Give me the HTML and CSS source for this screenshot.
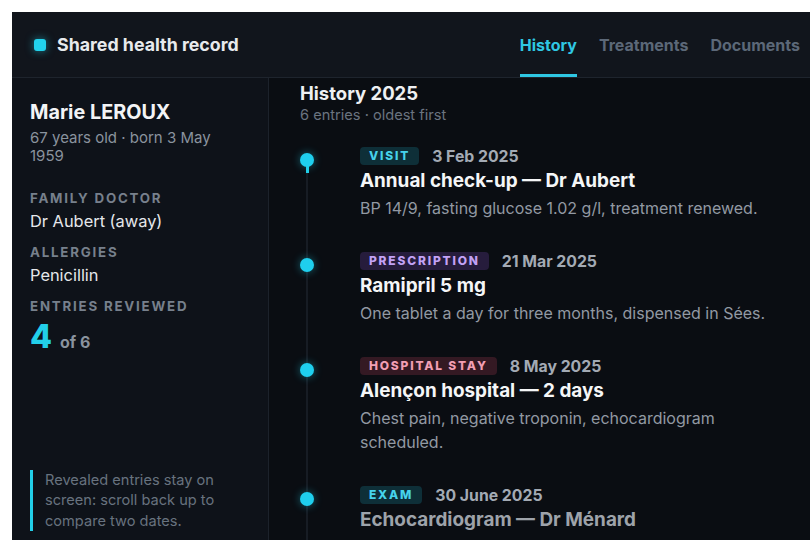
FILE: index.html
```html
<!DOCTYPE html>
<html lang="en">
<head>
<meta charset="utf-8">
<title>Shared health record</title>
<link rel="stylesheet" href="styles.css">
</head>
<body>
<div class="app">
  <header class="topbar">
    <div class="brand"><span class="brand-dot"></span><span class="brand-name">Shared health record</span></div>
    <nav class="tabs">
      <a class="tab active">History</a>
      <a class="tab">Treatments</a>
      <a class="tab">Documents</a>
    </nav>
  </header>
  <div class="body">
    <aside class="sidebar">
      <h1 class="patient">Marie LEROUX</h1>
      <p class="patient-meta">67 years old · born 3 May 1959</p>
      <div class="label first">Family doctor</div>
      <div class="value">Dr Aubert (away)</div>
      <div class="label">Allergies</div>
      <div class="value">Penicillin</div>
      <div class="label">Entries reviewed</div>
      <div class="count"><span class="count-num">4</span><span class="count-of">of 6</span></div>
      <p class="note">Revealed entries stay on screen: scroll back up to compare two dates.</p>
    </aside>
    <main class="main">
      <h2 class="section-title">History 2025</h2>
      <p class="section-sub">6 entries · oldest first</p>
      <div class="timeline">
        <span class="progress"></span>
        <article class="entry">
          <span class="dot"></span>
          <div class="entry-head"><span class="badge visit">Visit</span><span class="date">3 Feb 2025</span></div>
          <h3 class="entry-title">Annual check-up — Dr Aubert</h3>
          <p class="entry-desc">BP 14/9, fasting glucose 1.02 g/l, treatment renewed.</p>
        </article>
        <article class="entry">
          <span class="dot"></span>
          <div class="entry-head"><span class="badge prescription">Prescription</span><span class="date">21 Mar 2025</span></div>
          <h3 class="entry-title">Ramipril 5 mg</h3>
          <p class="entry-desc">One tablet a day for three months, dispensed in Sées.</p>
        </article>
        <article class="entry">
          <span class="dot"></span>
          <div class="entry-head"><span class="badge hospital">Hospital stay</span><span class="date">8 May 2025</span></div>
          <h3 class="entry-title">Alençon hospital — 2 days</h3>
          <p class="entry-desc">Chest pain, negative troponin, echocardiogram scheduled.</p>
        </article>
        <article class="entry revealing">
          <span class="dot"></span>
          <div class="entry-head"><span class="badge exam">Exam</span><span class="date">30 June 2025</span></div>
          <h3 class="entry-title">Echocardiogram — Dr Ménard</h3>
        </article>
      </div>
    </main>
  </div>
</div>
</body>
</html>
```

FILE: styles.css
```css
* { box-sizing: border-box; }
html, body { margin: 0; padding: 0; }
body {
  background: #ffffff;
  padding: 12px 0 0 12px;
  overflow: hidden;
  font-family: Inter, "Noto Sans", "Liberation Sans", sans-serif;
}
.app {
  width: 808px;
  height: 537px;
  background: #0a0d12;
  display: flex;
  flex-direction: column;
  overflow: hidden;
}
.topbar {
  height: 66px;
  flex: none;
  background: #11151c;
  border-bottom: 1px solid #1e242d;
  display: flex;
  align-items: stretch;
  justify-content: space-between;
  padding: 0 20px 0 22px;
}
.brand {
  display: flex;
  align-items: center;
  gap: 11px;
}
.brand-dot {
  width: 12px;
  height: 12px;
  border-radius: 3px;
  background: #22d3ee;
  box-shadow: 0 0 8px rgba(34, 211, 238, 0.55);
}
.brand-name {
  color: #e8eaed;
  font-size: 17.8px;
  font-weight: 700;
}
.tabs {
  display: flex;
  gap: 22px;
}
.tab {
  display: flex;
  align-items: center;
  padding-top: 3px;
  border-bottom: 3px solid transparent;
  color: #5c6878;
  font-size: 16px;
  font-weight: 700;
  cursor: pointer;
}
.tab.active {
  color: #2fc7e3;
  border-bottom-color: #2fc7e3;
}
.body {
  flex: 1;
  display: flex;
  min-height: 0;
}
.sidebar {
  width: 257px;
  flex: none;
  background: #0e1219;
  border-right: 1px solid #1c222b;
  padding: 22px 26px 18px 18px;
  display: flex;
  flex-direction: column;
}
.patient {
  margin: 0;
  color: #f3f4f6;
  font-size: 19.8px;
  line-height: 24px;
  font-weight: 700;
}
.patient-meta {
  margin: 5px 0 0;
  color: #8a939e;
  font-size: 15px;
  line-height: 18px;
}
.label {
  margin-top: 13px;
  color: #77808c;
  font-size: 13.3px;
  line-height: 16px;
  font-weight: 700;
  letter-spacing: 1.8px;
  text-transform: uppercase;
}
.label.first { margin-top: 25px; }
.value {
  margin-top: 5px;
  color: #e5e7eb;
  font-size: 16.4px;
  line-height: 20px;
}
.count {
  margin-top: 4px;
  display: flex;
  align-items: baseline;
  gap: 8px;
}
.count-num {
  color: #22cfe9;
  font-size: 32px;
  line-height: 38px;
  font-weight: 800;
}
.count-of {
  color: #8a939e;
  font-size: 16px;
  font-weight: 700;
}
.note {
  margin: auto -8px 0 0;
  border-left: 3px solid #22cfe9;
  padding-left: 12px;
  color: #68727f;
  font-size: 14.6px;
  line-height: 20.5px;
}
.main {
  flex: 1;
  min-width: 0;
  padding: 4px 0 0 31px;
  overflow: hidden;
}
.section-title {
  margin: 0;
  color: #eef0f2;
  font-size: 18.5px;
  line-height: 22px;
  font-weight: 700;
}
.section-sub {
  margin: 2px 0 0;
  color: #6b7480;
  font-size: 14.6px;
  line-height: 18px;
}
.timeline {
  position: relative;
  margin-top: 22px;
  padding-left: 60px;
}
.timeline::before {
  content: "";
  position: absolute;
  left: 6px;
  top: 14px;
  bottom: -200px;
  width: 2px;
  background: #171c24;
}
.progress {
  position: absolute;
  left: 6px;
  top: 14px;
  width: 3px;
  height: 13px;
  background: #22cfe9;
}
.entry {
  position: relative;
  margin-bottom: 31px;
}
.dot {
  position: absolute;
  left: -60px;
  top: 7px;
  width: 14px;
  height: 14px;
  border-radius: 50%;
  background: #1fcfee;
  box-shadow: 0 0 9px rgba(34, 211, 238, 0.45);
}
.entry-head {
  display: flex;
  align-items: center;
  gap: 13px;
  height: 20px;
}
.badge {
  display: inline-block;
  padding: 2px 9px;
  border-radius: 4px;
  font-size: 12px;
  line-height: 14px;
  font-weight: 800;
  letter-spacing: 1.8px;
  text-transform: uppercase;
}
.badge.visit, .badge.exam { background: #0e2f38; color: #46d3ec; }
.badge.prescription { background: #261c3c; color: #c3a2f5; }
.badge.hospital { background: #341923; color: #f29fb3; }
.date {
  color: #a3aab4;
  font-size: 15.8px;
  font-weight: 700;
}
.entry-title {
  margin: 3px 0 0;
  color: #f5f6f7;
  font-size: 18.9px;
  line-height: 24px;
  font-weight: 700;
}
.entry-desc {
  margin: 3px 0 0;
  color: #9299a3;
  font-size: 16px;
  line-height: 24px;
  max-width: 420px;
}
.revealing .entry-title { color: #9ea3aa; }
```
